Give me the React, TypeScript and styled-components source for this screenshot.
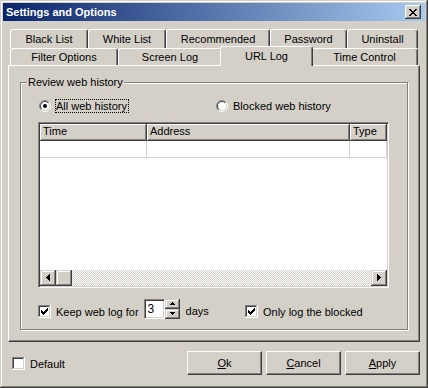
import React, { useId } from "react"
import styled, { createGlobalStyle, css } from "styled-components"

const topTabs = [
  { label: "Black List", width: 78 },
  { label: "White List", width: 78 },
  { label: "Recommended", width: 104 },
  { label: "Password", width: 77 },
  { label: "Uninstall", width: 71 },
]

const frontTabs = [
  { label: "Filter Options", width: 108 },
  { label: "Screen Log", width: 104 },
  { label: "URL Log", width: 89, selected: true },
  { label: "Time Control", width: 107 },
]

const columns = [
  { title: "Time", width: 107 },
  { title: "Address", width: 203 },
  { title: "Type", width: 37 },
]

// pixel glyphs: [x, y, w]
const checkPixels = [
  [9, 3, 1], [8, 4, 2], [3, 5, 1], [7, 5, 3], [3, 6, 2], [6, 6, 3], [3, 7, 5], [4, 8, 3], [5, 9, 1],
]
const closePixels = [
  [0, 0, 2], [6, 0, 2], [1, 1, 2], [5, 1, 2], [2, 2, 4], [3, 3, 2], [2, 4, 4], [1, 5, 2], [5, 5, 2], [0, 6, 2], [6, 6, 2],
]

const Pixels = ({ list, dx = 0, dy = 0 }: { list: number[][]; dx?: number; dy?: number }) => (
  <>
    {list.map(([x, y, w], i) => (
      <rect key={i} x={x + dx} y={y + dy} width={w} height={1} fill="#000" />
    ))}
  </>
)

const RadioIcon = ({ checked }: { checked?: boolean }) => {
  const id = useId().replace(/:/g, "")
  return (
    <svg width="12" height="12" viewBox="0 0 12 12">
      <defs>
        <linearGradient id={`o${id}`} x1="0" y1="0" x2="1" y2="1">
          <stop offset="0.5" stopColor="#808080" />
          <stop offset="0.5" stopColor="#ffffff" />
        </linearGradient>
        <linearGradient id={`i${id}`} x1="0" y1="0" x2="1" y2="1">
          <stop offset="0.5" stopColor="#404040" />
          <stop offset="0.5" stopColor="#d4d0c8" />
        </linearGradient>
      </defs>
      <circle cx="6" cy="6" r="5.5" fill="none" stroke={`url(#o${id})`} />
      <circle cx="6" cy="6" r="4.5" fill="#fff" stroke={`url(#i${id})`} />
      {checked && <circle cx="6" cy="6" r="2" fill="#000" />}
    </svg>
  )
}

const CheckIcon = ({ checked }: { checked?: boolean }) => (
  <svg width="13" height="13" viewBox="0 0 13 13" shapeRendering="crispEdges">
    <rect x="0" y="0" width="13" height="13" fill="#fff" />
    <rect x="0" y="0" width="12" height="1" fill="#808080" />
    <rect x="0" y="0" width="1" height="12" fill="#808080" />
    <rect x="1" y="1" width="10" height="1" fill="#404040" />
    <rect x="1" y="1" width="1" height="10" fill="#404040" />
    <rect x="1" y="11" width="11" height="1" fill="#d4d0c8" />
    <rect x="11" y="1" width="1" height="11" fill="#d4d0c8" />
    {checked && <Pixels list={checkPixels} />}
  </svg>
)

const ArrowIcon = ({ dir }: { dir: "left" | "right" | "up" | "down" }) => {
  if (dir === "left" || dir === "right") {
    const cols = dir === "left" ? [1, 3, 5, 7] : [7, 5, 3, 1]
    return (
      <svg width="16" height="16" viewBox="0 0 16 16" shapeRendering="crispEdges">
        {cols.map((h, i) => (
          <rect key={i} x={6 + i} y={7.5 - (h - 1) / 2 - 0.5} width={1} height={h} fill="#000" />
        ))}
      </svg>
    )
  }
  const rows = dir === "up" ? [1, 3, 5] : [5, 3, 1]
  return (
    <svg width="15" height="10" viewBox="0 0 15 10" shapeRendering="crispEdges">
      {rows.map((w, i) => (
        <rect key={i} x={7 - (w - 1) / 2} y={3 + i} width={w} height={1} fill="#000" />
      ))}
    </svg>
  )
}

const raisedSmall = css`
  background: #d4d0c8;
  box-shadow: inset -1px -1px #404040, inset 1px 1px #d4d0c8, inset -2px -2px #808080, inset 2px 2px #fff;
`

const GlobalStyle = createGlobalStyle`
  html, body { margin: 0; padding: 0; background: #d4d0c8; }
  body { font-family: "Liberation Sans", Arial, sans-serif; font-size: 11px; color: #000; }
  * { box-sizing: border-box; }
`

const Window = styled.div`
  width: 428px;
  height: 388px;
  padding: 3px;
  display: flex;
  flex-direction: column;
  background: #d4d0c8;
  box-shadow: inset -1px -1px #404040, inset 1px 1px #d4d0c8, inset -2px -2px #808080, inset 2px 2px #fff;
`

const TitleBar = styled.div`
  height: 18px;
  flex: none;
  display: flex;
  align-items: center;
  justify-content: space-between;
  padding: 0 4px 0 3px;
  background: linear-gradient(to right, #0a246a, #a6caf0);
  color: #fff;
  font-weight: bold;
  font-size: 11px;
`

const CloseButton = styled.div`
  width: 16px;
  height: 14px;
  display: flex;
  align-items: center;
  justify-content: center;
  ${raisedSmall};
  box-shadow: inset -1px -1px #404040, inset 1px 1px #fff, inset -2px -2px #808080, inset 2px 2px #d4d0c8;
`

const Body = styled.div`
  flex: 1;
  display: flex;
  flex-direction: column;
  padding: 8px 5px 0;
`

const TabRow = styled.div<{ $h: number }>`
  display: flex;
  height: ${(p) => p.$h}px;
  padding: 0 2px;
  flex: none;
`

const Tab = styled.div<{ $w: number; $selected?: boolean }>`
  width: ${(p) => p.$w + (p.$selected ? 4 : 0)}px;
  flex: none;
  display: flex;
  align-items: center;
  justify-content: center;
  white-space: nowrap;
  background: #d4d0c8;
  border-style: solid;
  border-width: 1px 1px 0 1px;
  border-color: #fff #404040 transparent #fff;
  border-radius: 3px 3px 0 0;
  box-shadow: inset -1px 0 #808080;

  ${(p) =>
    p.$selected &&
    css`
      position: relative;
      z-index: 2;
      margin: -2px -2px -1px;
      height: calc(100% + 3px);
      padding-bottom: 2px;
    `}
`

const Panel = styled.div`
  height: 277px;
  flex: none;
  display: flex;
  flex-direction: column;
  padding: 16px 11px 11px;
  border: 1px solid;
  border-color: #fff #404040 #404040 #fff;
  box-shadow: inset -1px -1px #808080;
`

const Group = styled.div`
  flex: 1;
  display: flex;
  flex-direction: column;
  padding: 0 18px 0 17px;
  border: 1px solid #808080;
  box-shadow: inset 1px 1px #fff, 1px 1px #fff;
`

const Legend = styled.div`
  align-self: flex-start;
  margin: -7px 0 0 -11px;
  padding: 0 1px;
  line-height: 13px;
  background: #d4d0c8;
`

const RadioRow = styled.div`
  display: grid;
  grid-template-columns: 177px auto;
  align-items: center;
  height: 16px;
  margin: 9px 0 0 1px;
`

const OptionLabel = styled.label`
  display: flex;
  align-items: center;
  gap: 4px;
  white-space: nowrap;
`

const Caption = styled.span<{ $focused?: boolean }>`
  line-height: 12px;
  padding: 0 1px 0 0;
  border: 1px ${(p) => (p.$focused ? "dotted #000" : "solid transparent")};
`

const ListView = styled.div`
  margin-top: 8px;
  height: 166px;
  flex: none;
  display: flex;
  flex-direction: column;
  background: #fff;
  border: 1px solid;
  border-color: #808080 #fff #fff #808080;
  padding: 1px;
  box-shadow: inset 1px 1px #404040, inset -1px -1px #d4d0c8;
`

const GridRow = styled.div`
  display: flex;
  flex: none;
`

const HeaderCell = styled.div<{ $w: number }>`
  width: ${(p) => p.$w}px;
  height: 17px;
  flex: none;
  padding: 0 3px;
  line-height: 15px;
  background: #d4d0c8;
  border-right: 1px solid #404040;
  border-bottom: 1px solid #404040;
  box-shadow: inset 1px 1px #fff, inset -1px -1px #808080;
`

const Cell = styled.div<{ $w: number }>`
  width: ${(p) => p.$w}px;
  height: 17px;
  flex: none;
  border-right: 1px solid #d4d0c8;
  border-bottom: 1px solid #d4d0c8;
`

const ListFill = styled.div`
  flex: 1;
`

const HScroll = styled.div`
  height: 16px;
  flex: none;
  display: flex;
  background: repeating-conic-gradient(#d4d0c8 0% 25%, #fff 0% 50%) 0 0 / 2px 2px;
`

const ScrollButton = styled.div`
  width: 16px;
  height: 16px;
  flex: none;
  ${raisedSmall};
  svg {
    display: block;
  }
`

const ScrollTrack = styled.div`
  flex: 1;
`

const BottomRow = styled.div`
  display: grid;
  grid-template-columns: 207px auto;
  align-items: end;
  height: 20px;
  margin-top: 11px;
`

const Inline = styled.div`
  display: flex;
  align-items: flex-end;
`

const CheckLabel = styled.label`
  display: flex;
  align-items: center;
  gap: 5px;
  height: 13px;
  margin-bottom: 1px;
  white-space: nowrap;
  svg {
    display: block;
    flex: none;
  }
`

const SpinBox = styled.div`
  display: flex;
  margin-left: 5px;
`

const SpinField = styled.div`
  width: 21px;
  height: 20px;
  padding: 0 2px 0 3px;
  line-height: 18px;
  font-size: 12px;
  background: #fff;
  border: 1px solid;
  border-color: #808080 #fff #fff #808080;
  box-shadow: inset 1px 1px #404040, inset -1px -1px #d4d0c8;
`

const SpinButtons = styled.div`
  display: flex;
  flex-direction: column;
`

const SpinButton = styled.div`
  width: 15px;
  height: 10px;
  ${raisedSmall};
  svg {
    display: block;
  }
`

const Suffix = styled.span`
  margin: 0 0 1px 6px;
  line-height: 13px;
`

const Footer = styled.div`
  flex: 1;
  display: flex;
  align-items: flex-start;
  padding-top: 9px;
`

const DefaultOption = styled(CheckLabel)`
  margin: 6px 0 0 4px;
`

const ButtonBar = styled.div`
  display: flex;
  gap: 4px;
  margin-left: auto;
`

const Button = styled.button`
  width: 75px;
  height: 24px;
  padding: 0;
  font: inherit;
  color: #000;
  background: #d4d0c8;
  border: 1px solid;
  border-color: #fff #404040 #404040 #fff;
  box-shadow: inset -1px -1px #808080;

  u {
    text-decoration: underline;
  }
`

const App = () => {
  return (
    <>
      <GlobalStyle />
      <Window>
        <TitleBar>
          <span>{"Settings and Options"}</span>
          <CloseButton>
            <svg width="8" height="7" viewBox="0 0 8 7" shapeRendering="crispEdges">
              <Pixels list={closePixels} />
            </svg>
          </CloseButton>
        </TitleBar>

        <Body>
          <TabRow $h={19}>
            {topTabs.map((t) => (
              <Tab key={t.label} $w={t.width}>
                {t.label}
              </Tab>
            ))}
          </TabRow>
          <TabRow $h={17}>
            {frontTabs.map((t) => (
              <Tab key={t.label} $w={t.width} $selected={t.selected}>
                {t.label}
              </Tab>
            ))}
          </TabRow>

          <Panel>
            <Group>
              <Legend>{"Review web history"}</Legend>
              <RadioRow>
                <OptionLabel>
                  <RadioIcon checked />
                  <Caption $focused>{"All web history"}</Caption>
                </OptionLabel>
                <OptionLabel>
                  <RadioIcon />
                  <Caption>{"Blocked web history"}</Caption>
                </OptionLabel>
              </RadioRow>

              <ListView>
                <GridRow>
                  {columns.map((c) => (
                    <HeaderCell key={c.title} $w={c.width}>
                      {c.title}
                    </HeaderCell>
                  ))}
                </GridRow>
                <GridRow>
                  {columns.map((c) => (
                    <Cell key={c.title} $w={c.width} />
                  ))}
                </GridRow>
                <ListFill />
                <HScroll>
                  <ScrollButton>
                    <ArrowIcon dir="left" />
                  </ScrollButton>
                  <ScrollButton />
                  <ScrollTrack />
                  <ScrollButton>
                    <ArrowIcon dir="right" />
                  </ScrollButton>
                </HScroll>
              </ListView>

              <BottomRow>
                <Inline>
                  <CheckLabel>
                    <CheckIcon checked />
                    {"Keep web log for"}
                  </CheckLabel>
                  <SpinBox>
                    <SpinField>{"3"}</SpinField>
                    <SpinButtons>
                      <SpinButton>
                        <ArrowIcon dir="up" />
                      </SpinButton>
                      <SpinButton>
                        <ArrowIcon dir="down" />
                      </SpinButton>
                    </SpinButtons>
                  </SpinBox>
                  <Suffix>{"days"}</Suffix>
                </Inline>
                <Inline>
                  <CheckLabel>
                    <CheckIcon checked />
                    {"Only log the blocked"}
                  </CheckLabel>
                </Inline>
              </BottomRow>
            </Group>
          </Panel>

          <Footer>
            <DefaultOption>
              <CheckIcon />
              {"Default"}
            </DefaultOption>
            <ButtonBar>
              <Button>
                <u>{"O"}</u>
                {"k"}
              </Button>
              <Button>
                <u>{"C"}</u>
                {"ancel"}
              </Button>
              <Button>
                <u>{"A"}</u>
                {"pply"}
              </Button>
            </ButtonBar>
          </Footer>
        </Body>
      </Window>
    </>
  )
}

export default App
